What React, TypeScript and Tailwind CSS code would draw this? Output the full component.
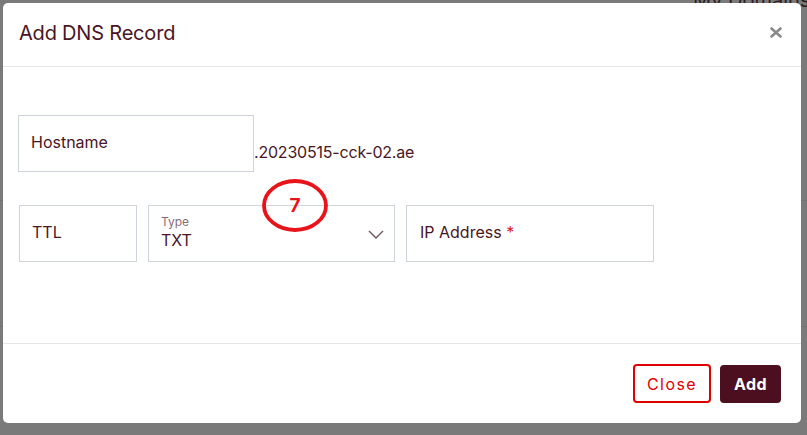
import React from "react";

const ink = "text-[#4a1524]";

function Field({
  className,
  children,
}: {
  className?: string;
  children: React.ReactNode;
}) {
  return (
    <div
      className={`h-[57px] border border-[#cfd3da] bg-white flex items-center ${className ?? ""}`}
    >
      {children}
    </div>
  );
}

export default function App() {
  return (
    <div
      className="relative w-[807px] h-[435px] overflow-hidden bg-[#7a7a7a]"
      style={{ fontFamily: "Inter, 'Liberation Sans', sans-serif" }}
    >
      {/* dimmed page behind the modal */}
      <div className="absolute left-[693px] top-[-15px] text-[20px] text-[#2e1c21] whitespace-nowrap">
        My Domains
      </div>
      <div className="absolute left-0 right-0 top-[200px] h-px bg-[#707070]" />
      <div className="absolute left-0 right-0 top-[326px] h-px bg-[#707070]" />

      {/* modal */}
      <div className="absolute left-[3px] top-[3px] w-[798px] h-[420px] bg-white rounded-[5px] flex flex-col">
        <div className="h-[64px] border-b border-[#e6e6e6] flex items-center justify-between pl-[16px] pr-[19px] pb-[4px] shrink-0">
          <h2 className={`text-[20px] leading-none ${ink} tracking-[-0.2px]`}>Add DNS Record</h2>
          <svg width="12" height="11" viewBox="0 0 12 11">
            <path
              d="M1.5 1.5 L10.5 9.5 M10.5 1.5 L1.5 9.5"
              stroke="#8a8a8a"
              strokeWidth="2.6"
              strokeLinecap="round"
            />
          </svg>
        </div>

        <div className="flex-1 border-b border-[#e6e6e6] pt-[48px] pl-[15px]">
          <div className="flex items-end">
            <Field className="w-[236px] px-[12px] pb-[3px]">
              <span className={`text-[16px] ${ink}`}>Hostname</span>
            </Field>
            <span className={`text-[16px] ${ink} pb-[8px] tracking-[-0.2px]`}>.20230515-cck-02.ae</span>
          </div>

          <div className="flex gap-[11px] mt-[33px] pl-[1px]">
            <Field className="w-[118px] px-[12px] pb-[3px]">
              <span className={`text-[16px] ${ink}`}>TTL</span>
            </Field>
            <Field className="w-[247px] pl-[12px] pr-[10px] justify-between">
              <div className="flex flex-col pb-[2px]">
                <span className="text-[12px] leading-[14px] text-[#8a6c76]">Type</span>
                <span className={`text-[16px] leading-[22px] ${ink}`}>TXT</span>
              </div>
              <svg width="16" height="9" viewBox="0 0 16 9" className="mt-[1px]">
                <path d="M1 1 L8 8 L15 1" fill="none" stroke="#6e5560" strokeWidth="1.4" />
              </svg>
            </Field>
            <Field className="w-[248px] px-[13px] pb-[3px]">
              <span className={`text-[16px] ${ink}`}>
                IP Address <span className="text-[#e01b1b]">*</span>
              </span>
            </Field>
          </div>
        </div>

        <div className="h-[79px] flex items-center justify-end gap-[9px] pr-[20px] shrink-0">
          <button className="w-[78px] h-[39px] border-2 border-[#e00000] rounded-[4px] text-[16px] font-normal tracking-[1.4px] text-[#e00000] bg-white">
            Close
          </button>
          <button className="w-[61px] h-[38px] rounded-[4px] bg-[#4c0f1f] text-white text-[16px] font-bold tracking-[0.5px]">
            Add
          </button>
        </div>
      </div>

      {/* annotation marker */}
      <svg
        className="absolute left-[261px] top-[178px]"
        width="68"
        height="55"
        viewBox="0 0 68 55"
      >
        <ellipse cx="34" cy="27.5" rx="31" ry="24.5" fill="none" stroke="#e8141c" strokeWidth="3.8" />
      </svg>
      <div className="absolute left-[286px] top-[194px] w-[18px] text-center text-[19px] font-bold leading-[24px] text-[#e8141c]">
        7
      </div>
    </div>
  );
}
